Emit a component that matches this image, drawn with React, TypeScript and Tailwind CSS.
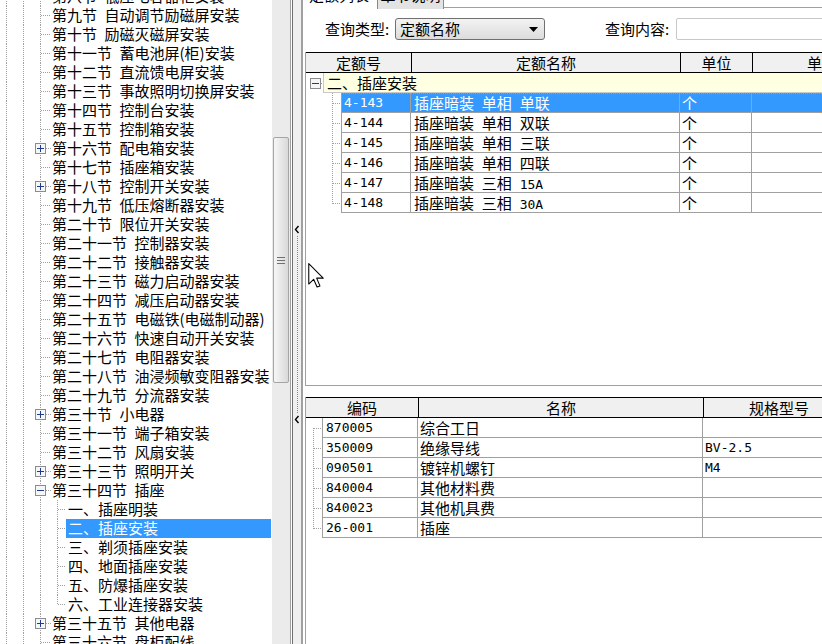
import React from 'react';

type Kind = 'leaf' | 'plus' | 'minus';

const TREE_TOP: [string, string, Kind][] = [
  ['第八节', '低压电容器柜安装', 'leaf'],
  ['第九节', '自动调节励磁屏安装', 'leaf'],
  ['第十节', '励磁灭磁屏安装', 'leaf'],
  ['第十一节', '蓄电池屏(柜)安装', 'leaf'],
  ['第十二节', '直流馈电屏安装', 'leaf'],
  ['第十三节', '事故照明切换屏安装', 'leaf'],
  ['第十四节', '控制台安装', 'leaf'],
  ['第十五节', '控制箱安装', 'leaf'],
  ['第十六节', '配电箱安装', 'plus'],
  ['第十七节', '插座箱安装', 'leaf'],
  ['第十八节', '控制开关安装', 'plus'],
  ['第十九节', '低压熔断器安装', 'leaf'],
  ['第二十节', '限位开关安装', 'leaf'],
  ['第二十一节', '控制器安装', 'leaf'],
  ['第二十二节', '接触器安装', 'leaf'],
  ['第二十三节', '磁力启动器安装', 'leaf'],
  ['第二十四节', '减压启动器安装', 'leaf'],
  ['第二十五节', '电磁铁(电磁制动器)', 'leaf'],
  ['第二十六节', '快速自动开关安装', 'leaf'],
  ['第二十七节', '电阻器安装', 'leaf'],
  ['第二十八节', '油浸频敏变阻器安装', 'leaf'],
  ['第二十九节', '分流器安装', 'leaf'],
  ['第三十节', '小电器', 'plus'],
  ['第三十一节', '端子箱安装', 'leaf'],
  ['第三十二节', '风扇安装', 'leaf'],
  ['第三十三节', '照明开关', 'plus'],
  ['第三十四节', '插座', 'minus'],
];

const SUBS = ['一、插座明装', '二、插座安装', '三、剃须插座安装', '四、地面插座安装', '五、防爆插座安装', '六、工业连接器安装'];

const TREE_BOTTOM: [string, string, Kind][] = [
  ['第三十五节', '其他电器', 'plus'],
  ['第三十六节', '盘柜配线', 'leaf'],
];

const QUOTAS = [
  ['4-143', '插座暗装 单相 单联', '个'],
  ['4-144', '插座暗装 单相 双联', '个'],
  ['4-145', '插座暗装 单相 三联', '个'],
  ['4-146', '插座暗装 单相 四联', '个'],
  ['4-147', '插座暗装 三相 15A', '个'],
  ['4-148', '插座暗装 三相 30A', '个'],
];

const MATERIALS = [
  ['870005', '综合工日', ''],
  ['350009', '绝缘导线', 'BV-2.5'],
  ['090501', '镀锌机螺钉', 'M4'],
  ['840004', '其他材料费', ''],
  ['840023', '其他机具费', ''],
  ['26-001', '插座', ''],
];

const dot = { stroke: '#a0a0a0', strokeDasharray: '1 1', shapeRendering: 'crispEdges' as const };

function VLine({ x, y1 = 0, y2 }: { x: number; y1?: number; y2: number }) {
  return <line x1={x} x2={x} y1={y1} y2={y2} {...dot} />;
}

function HLine({ y, x1, x2 }: { y: number; x1: number; x2: number }) {
  return <line x1={x1} x2={x2} y1={y} y2={y} {...dot} />;
}

function Box({ x, y, minus }: { x: number; y: number; minus?: boolean }) {
  return (
    <g shapeRendering="crispEdges">
      <rect x={x + 0.5} y={y + 0.5} width={10} height={10} fill="#f6f6f6" stroke="#8c8c8c" />
      <rect x={x + 2} y={y + 5} width={7} height={1} fill="#1d3c8f" />
      {!minus && <rect x={x + 5} y={y + 2} width={1} height={7} fill="#1d3c8f" />}
    </g>
  );
}

// ascii runs go in the mono face, like the old SimSun half-width glyphs
function Mixed({ text }: { text: string }) {
  const parts = text.split(/([\x20-\x7e]+)/);
  return (
    <>
      {parts.map((p, i) =>
        /^[\x20-\x7e]+$/.test(p) ? (
          <span key={i} className="font-['DejaVu_Sans_Mono',monospace] text-[13px] whitespace-pre">
            {p}
          </span>
        ) : (
          <span key={i}>{p}</span>
        )
      )}
    </>
  );
}

function SectionRow({ label, title, kind }: { label: string; title: string; kind: Kind }) {
  return (
    <div className="flex h-[19px] items-center shrink-0">
      <svg width={52} height={19} className="shrink-0">
        <VLine x={6.5} y2={19} />
        <VLine x={23.5} y2={19} />
        <VLine x={40.5} y2={19} />
        {kind === 'leaf' ? <HLine y={9.5} x1={41} x2={51} /> : <HLine y={9.5} x1={46} x2={51} />}
        {kind !== 'leaf' && <Box x={35} y={4} minus={kind === 'minus'} />}
      </svg>
      <span className="whitespace-pre leading-[18px] pb-[1px]">
        {label}
        {'\u2002'}
        {title}
      </span>
    </div>
  );
}

function SubRow({ text, last, selected }: { text: string; last?: boolean; selected?: boolean }) {
  return (
    <div className="flex h-[19px] items-center shrink-0">
      <svg width={66} height={19} className="shrink-0">
        <VLine x={6.5} y2={19} />
        <VLine x={23.5} y2={19} />
        <VLine x={40.5} y2={19} />
        <VLine x={57.5} y2={last ? 10 : 19} />
        <HLine y={9.5} x1={58} x2={66} />
      </svg>
      <span
        className={
          selected
            ? 'h-[19px] w-[205px] bg-[#3399ff] pl-[2px] leading-[18px] text-white'
            : 'pl-[2px] leading-[18px] pb-[1px]'
        }
      >
        {text}
      </span>
    </div>
  );
}

function Chevron() {
  return (
    <svg width={8} height={13} className="shrink-0">
      <polyline points="5.5,3 2.5,6.5 5.5,10" fill="none" stroke="#000" strokeWidth={1.4} />
    </svg>
  );
}

function Cursor() {
  return (
    <svg width={16} height={25} viewBox="0 0 12 19" className="absolute left-[308px] top-[263px]">
      <path d="M0.5 0.5 L0.5 16 L4.2 12.4 L6.8 18.3 L9 17.4 L6.5 11.5 L11.5 11.5 Z" fill="#fff" stroke="#000" strokeWidth={0.8} strokeLinejoin="round" />
    </svg>
  );
}

export default function App() {
  return (
    <div className="relative flex h-[644px] w-[822px] overflow-hidden bg-white text-[15px] text-black font-['Noto_Sans_CJK_SC','Liberation_Sans',sans-serif]">
      {/* tree */}
      <div className="h-full w-[272px] shrink-0 overflow-hidden">
        <div className="-mt-[13px] flex flex-col">
          {TREE_TOP.map(([l, t, k]) => (
            <SectionRow key={l} label={l} title={t} kind={k} />
          ))}
          {SUBS.map((s, i) => (
            <SubRow key={s} text={s} selected={i === 1} last={i === SUBS.length - 1} />
          ))}
          {TREE_BOTTOM.map(([l, t, k]) => (
            <SectionRow key={l} label={l} title={t} kind={k} />
          ))}
        </div>
      </div>

      {/* scrollbar */}
      <div className="flex h-full w-[19px] shrink-0 flex-col border-r border-[#a0a0a0] bg-[#ebebeb]">
        <div className="mx-[1px] mt-[137px] flex h-[246px] items-center justify-center rounded-[2px] border border-[#a5a5a5] bg-gradient-to-r from-[#f6f6f6] to-[#d9d9d9]">
          <div className="flex flex-col gap-[2px]">
            <div className="h-[1px] w-[8px] bg-[#707070]" />
            <div className="h-[1px] w-[8px] bg-[#707070]" />
            <div className="h-[1px] w-[8px] bg-[#707070]" />
          </div>
        </div>
      </div>
      <div className="w-[1px] shrink-0 bg-white" />

      {/* splitter */}
      <div className="flex h-full w-[10px] shrink-0 flex-col border-x border-l-[#707070] border-r-[#a0a0a0] bg-[#f0f0f0]">
        <div className="h-[223px] shrink-0" />
        <Chevron />
        <div className="ml-[4px] h-[177px] shrink-0 border-l border-dotted border-[#3399ff]" />
        <Chevron />
      </div>

      {/* right panel */}
      <div className="flex h-full min-w-0 flex-1 flex-col overflow-hidden border-l border-[#a0a0a0]">
        {/* tabs */}
        <div className="flex h-[9px] shrink-0 items-end overflow-hidden">
          <div className="h-[24px] w-[74px] shrink-0 pl-[6px] leading-[20px]">定额列表</div>
          <div className="h-[24px] w-[67px] shrink-0 border-x border-[#8a8a8a] bg-[#e3e3e3] text-center leading-[20px]">章节说明</div>
          <div className="h-[2px] flex-1 border-t border-[#a0a0a0]" />
        </div>

        {/* query */}
        <div className="mt-[9px] flex h-[22px] shrink-0 items-center pl-[22px]">
          <span className="w-[70px] shrink-0 leading-[22px]">查询类型:</span>
          <div className="flex h-[22px] w-[150px] shrink-0 items-center justify-between rounded-[3px] border border-[#707070] bg-gradient-to-b from-[#f3f3f3] to-[#dcdcdc] pl-[4px] pr-[6px]">
            <span className="leading-[20px]">定额名称</span>
            <svg width={9} height={5}>
              <path d="M0 0 L9 0 L4.5 5 Z" fill="#000" />
            </svg>
          </div>
          <span className="ml-[60px] w-[71px] shrink-0 leading-[22px]">查询内容:</span>
          <div className="h-[22px] w-[200px] shrink-0 rounded-[2px] border border-[#c8c8c8] bg-white" />
        </div>

        {/* quota table */}
        <div className="ml-[2px] mt-[12px] flex h-[334px] w-[600px] shrink-0 flex-col border-b border-l border-[#a0a0a0]">
          <div className="flex h-[21px] shrink-0 border-y border-black bg-[#f0f0f0] leading-[19px]">
            <div className="w-[105px] shrink-0 text-center">定额号</div>
            <div className="w-[269px] shrink-0 border-l border-black text-center">定额名称</div>
            <div className="w-[72px] shrink-0 border-l border-black text-center">单位</div>
            <div className="w-[140px] shrink-0 border-x border-black text-center">单价</div>
          </div>
          <div className="flex h-[20px] shrink-0">
            <svg width={17} height={20} className="shrink-0">
              <Box x={4} y={5} minus />
              <HLine y={10.5} x1={15} x2={17} />
            </svg>
            <div className="flex-1 border-b border-l border-[#c8c8c8] bg-[#ffffe1] pl-[3px] leading-[19px]">二、插座安装</div>
          </div>
          {QUOTAS.map(([code, name, unit], i) => {
            const sel = i === 0;
            const last = i === QUOTAS.length - 1;
            return (
              <div key={code} className="flex h-[20px] shrink-0">
                <svg width={35} height={20} className="shrink-0">
                  <VLine x={26.5} y2={last ? 11 : 20} />
                  <HLine y={10.5} x1={27} x2={35} />
                </svg>
                <div
                  className={
                    sel
                      ? 'flex bg-[#3399ff] text-white outline outline-1 outline-dotted outline-[#f08c28] -outline-offset-1'
                      : 'flex'
                  }
                >
                  <div className="w-[70px] shrink-0 border-x border-b border-[#a0a0a0] pl-[2px] font-['DejaVu_Sans_Mono',monospace] text-[13px] leading-[19px]">
                    {code}
                  </div>
                  <div className="w-[269px] shrink-0 border-r border-b border-[#a0a0a0] pl-[3px] leading-[19px]">
                    <Mixed text={name} />
                  </div>
                  <div className="w-[72px] shrink-0 border-r border-b border-[#a0a0a0] pl-[2px] leading-[19px]">{unit}</div>
                  <div className="w-[140px] shrink-0 border-r border-b border-[#a0a0a0]" />
                </div>
              </div>
            );
          })}
        </div>

        {/* material table */}
        <div className="ml-[2px] mt-[11px] flex w-[600px] flex-1 flex-col border-l border-[#a0a0a0]">
          <div className="flex h-[21px] shrink-0 border-y border-black bg-[#f0f0f0] leading-[19px]">
            <div className="w-[112px] shrink-0 text-center">编码</div>
            <div className="w-[285px] shrink-0 border-l border-black text-center">名称</div>
            <div className="w-[152px] shrink-0 border-x border-black text-center">规格型号</div>
          </div>
          {MATERIALS.map(([code, name, spec], i) => {
            const first = i === 0;
            const last = i === MATERIALS.length - 1;
            return (
              <div key={code} className="flex h-[20px] shrink-0">
                <svg width={16} height={20} className="shrink-0">
                  <VLine x={7.5} y1={first ? 10 : 0} y2={last ? 11 : 20} />
                  <HLine y={10.5} x1={8} x2={16} />
                </svg>
                <div className="w-[96px] shrink-0 border-x border-b border-[#a0a0a0] pl-[3px] font-['DejaVu_Sans_Mono',monospace] text-[13px] leading-[19px]">
                  {code}
                </div>
                <div className="w-[285px] shrink-0 border-r border-b border-[#a0a0a0] pl-[2px] leading-[19px]">{name}</div>
                <div className="w-[152px] shrink-0 border-r border-b border-[#a0a0a0] pl-[2px] font-['DejaVu_Sans_Mono',monospace] text-[13px] leading-[19px]">
                  {spec}
                </div>
              </div>
            );
          })}
        </div>
      </div>

      <Cursor />
    </div>
  );
}
